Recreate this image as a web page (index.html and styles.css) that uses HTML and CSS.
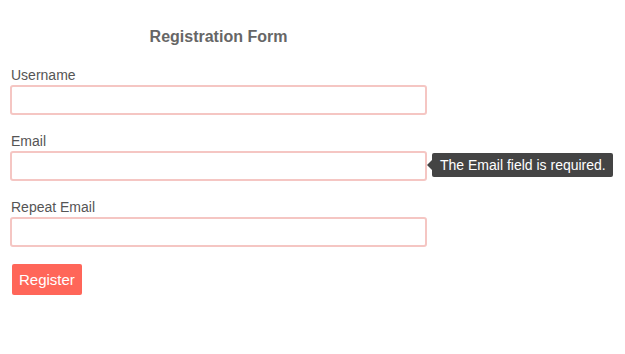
FILE: index.html
```
<!DOCTYPE html>
<html lang="en">
<head>
<meta charset="utf-8">
<title>Registration Form</title>
<link rel="stylesheet" href="styles.css">
</head>
<body>
<form class="form">
  <h2 class="title">Registration Form</h2>
  <div class="field">
    <label class="label" for="username">Username</label>
    <input class="input" id="username" type="text">
  </div>
  <div class="field">
    <label class="label" for="email">Email</label>
    <div class="input-wrap">
      <input class="input" id="email" type="text">
      <div class="tooltip">The Email field is required.</div>
    </div>
  </div>
  <div class="field field-last">
    <label class="label" for="repeat">Repeat Email</label>
    <input class="input" id="repeat" type="text">
  </div>
  <button class="button" type="button">Register</button>
</form>
</body>
</html>
```
FILE: styles.css
```
html, body {
  margin: 0;
  padding: 0;
  background: #ffffff;
}
body {
  font-family: "Liberation Sans", Arial, Helvetica, sans-serif;
  color: #555555;
}
.form {
  width: 417px;
  padding: 28px 0 0 10px;
  display: flex;
  flex-direction: column;
}
.title {
  margin: 0 0 21px 0;
  font-size: 16px;
  line-height: 18px;
  font-weight: bold;
  color: #666666;
  text-align: center;
}
.field {
  display: flex;
  flex-direction: column;
  margin-bottom: 18px;
}
.field-last {
  margin-bottom: 17px;
}
.label {
  font-size: 14px;
  line-height: 16px;
  color: #555555;
  margin: 0 0 2px 1px;
}
.input-wrap {
  position: relative;
}
.input {
  box-sizing: border-box;
  width: 417px;
  height: 30px;
  margin: 0;
  border: 2px solid #f5c6c3;
  border-radius: 3px;
  background: #ffffff;
  outline: none;
  padding: 0 8px;
  font-family: inherit;
  font-size: 14px;
}
.tooltip {
  position: absolute;
  left: 422px;
  top: 2px;
  height: 24px;
  box-sizing: border-box;
  padding: 0 7px 0 8px;
  background: #444444;
  color: #ffffff;
  font-size: 14px;
  line-height: 24px;
  white-space: nowrap;
  border-radius: 2px;
}
.tooltip::before {
  content: "";
  position: absolute;
  left: -5px;
  top: 7px;
  border-top: 5px solid transparent;
  border-bottom: 5px solid transparent;
  border-right: 5px solid #444444;
}
.button {
  align-self: flex-start;
  margin: 0 0 0 2px;
  height: 31px;
  padding: 0 7px;
  border: none;
  border-radius: 2px;
  background: #ff6659;
  color: #ffffff;
  font-family: inherit;
  font-size: 15px;
  cursor: pointer;
}
```
